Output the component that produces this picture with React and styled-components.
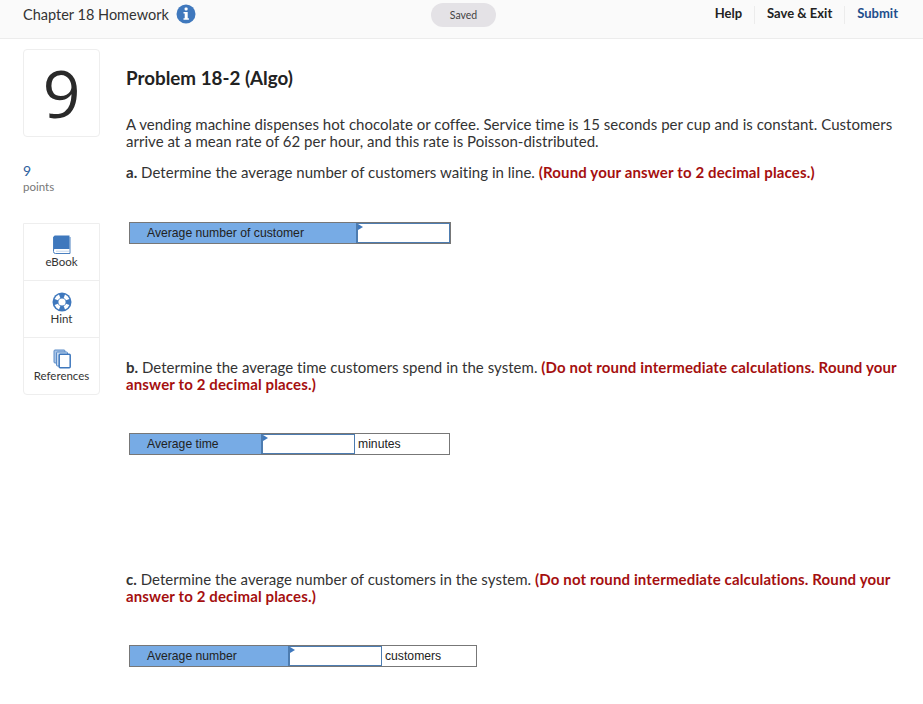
import React from 'react';
import styled, { createGlobalStyle } from 'styled-components';

const GlobalStyle = createGlobalStyle`
  html, body { margin: 0; padding: 0; background: #fff; }
  body { font-family: 'Lato', 'Liberation Sans', sans-serif; color: #222; }
`;

const TopBar = styled.header`
  height: 28px;
  background: #fafafa;
  border-bottom: 1px solid #ececec;
  display: grid;
  grid-template-columns: 1fr auto 1fr;
  align-items: center;
  padding: 0 25px 10px 23px;
`;
const TitleGroup = styled.div`
  display: flex;
  align-items: center;
  gap: 7px;
  font-size: 14.5px;
  color: #333;
`;
const SavedPill = styled.div`
  width: 65px;
  height: 24px;
  border-radius: 12px;
  background: #e4e2e6;
  color: #444;
  font-size: 10.5px;
  display: flex;
  align-items: center;
  justify-content: center;
  margin: 2px 0 0 6px;
`;
const TopActions = styled.nav`
  display: flex;
  justify-content: flex-end;
  align-items: center;
  margin-top: 2px;
`;
const TopAction = styled.span`
  font-size: 13px;
  font-weight: 700;
  color: ${p => (p.$accent ? '#1f4e8c' : '#222')};
  padding: 0 ${p => (p.$last ? 0 : 12)}px 0 12px;
  height: 18px;
  line-height: 15px;
  border-right: ${p => (p.$last ? 'none' : '1px solid #ececec')};
`;

const Page = styled.div`
  display: flex;
  padding: 10px 0 0 23px;
`;
const Side = styled.aside`
  width: 77px;
  flex: none;
  margin-right: 26px;
`;
const NumberCard = styled.div`
  height: 83px;
  padding-bottom: 3px;
  border: 1px solid #eee;
  border-radius: 4px;
  display: flex;
  align-items: center;
  justify-content: center;
  font-family: 'Open Sans', 'Liberation Sans', sans-serif;
  font-size: 66px;
  font-weight: 400;
  color: #2a2a2a;
`;
const Points = styled.div`
  margin-top: 26px;
  font-size: 14px;
  color: #2d5f9e;
  line-height: 16px;
`;
const PointsLabel = styled.div`
  margin-top: 1px;
  font-size: 11.5px;
  color: #777;
  line-height: 14px;
`;
const ToolCard = styled.div`
  margin-top: 29px;
  border: 1px solid #eee;
  border-radius: 0 0 4px 4px;
`;
const Tool = styled.div`
  height: ${p => (p.$last ? 56 : 57)}px;
  border-bottom: ${p => (p.$last ? 'none' : '1px solid #eee')};
  display: flex;
  flex-direction: column;
  align-items: center;
  padding-top: 11px;
  box-sizing: border-box;
  font-size: 11.5px;
  line-height: 14px;
  color: #333;
`;
const IconSlot = styled.div`
  height: 20px;
  display: flex;
`;
const Main = styled.main`
  flex: 1;
  min-width: 0;
  padding-right: 20px;
`;
const Heading = styled.h1`
  margin: 19px 0 0;
  font-size: 18.8px;
  line-height: 20px;
  font-weight: 700;
  color: #222;
`;
const Para = styled.p`
  margin: ${p => p.$top}px 0 0;
  font-size: 15px;
  line-height: 17px;
  letter-spacing: 0.03px;
  color: #333;
`;
const Red = styled.strong`
  color: #a50f0f;
  font-weight: 700;
  letter-spacing: 0.14px;
`;
const AnswerTable = styled.div`
  margin: ${p => p.$top}px 0 0 3px;
  display: flex;
  height: 22px;
  width: ${p => p.$width}px;
  box-sizing: border-box;
  border: 1px solid #777;
  font-family: 'Liberation Sans', Arial, sans-serif;
  font-size: 12.2px;
  color: #222;
`;
const Label = styled.div`
  width: ${p => p.$width}px;
  flex: none;
  background: #77abe5;
  padding-left: 17px;
  box-sizing: border-box;
  line-height: 20px;
`;
const Input = styled.div`
  position: relative;
  width: ${p => p.$width}px;
  flex: none;
  box-sizing: border-box;
  background: #fff;
  border: 1px solid #4d7cb0;
  border-left-width: 2px;
  &::before {
    content: '';
    position: absolute;
    left: 0;
    top: 0;
    border-left: 5px solid #3f78bd;
    border-top: 3px solid transparent;
    border-bottom: 3px solid transparent;
  }
`;
const Unit = styled.div`
  flex: 1;
  padding-left: 3px;
  line-height: 20px;
`;

const InfoIcon = () => (
  <svg width="20" height="20" viewBox="0 0 20 20">
    <circle cx="10" cy="10" r="9.5" fill="#3f78bd" />
    <rect x="8.6" y="3.6" width="3" height="3" rx="1" fill="#fff" />
    <path d="M7.5 8h4.2v6.2h1.2v1.6H7.5v-1.6h1.2V9.6H7.5z" fill="#fff" />
  </svg>
);
const BookIcon = () => (
  <svg width="18" height="20" viewBox="0 0 18 20">
    <path d="M2 .5h14.5V14H2a2 2 0 0 0-1.5.6V2A1.5 1.5 0 0 1 2 .5z" fill="#3f78bd" />
    <path d="M.5 2v14.5A2 2 0 0 0 2.5 18.5h14.5V2" fill="none" stroke="#4a80c0" />
    <path d="M3 14.5h13v2.5H3a1.2 1.2 0 0 1 0-2.5z" fill="#fff" />
    <path d="M3 16.2h13" stroke="#c4d7ee" />
  </svg>
);
const HintIcon = () => (
  <svg width="20" height="20" viewBox="0 0 20 20">
    <circle cx="10" cy="10" r="9.5" fill="#3f78bd" />
    <circle cx="10" cy="10" r="6.2" fill="none" stroke="#fff" strokeWidth="3.6" pathLength="360" strokeDasharray="44 46" strokeDashoffset="-23" />
    <circle cx="10" cy="10" r="3.6" fill="#fff" />
  </svg>
);
const RefIcon = () => (
  <svg width="18" height="20" viewBox="0 0 18 20">
    <rect x="1" y="1" width="11" height="13" rx="1" fill="#a9c4e6" stroke="#5b8cc8" />
    <rect x="3.5" y="3" width="11" height="14" rx="1" fill="#c7daf0" stroke="#5b8cc8" />
    <rect x="6.2" y="5.2" width="11" height="13.6" rx="1" fill="#fff" stroke="#3f78bd" strokeWidth="1.5" />
  </svg>
);

export default function App() {
  return (
    <>
      <GlobalStyle />
      <TopBar>
        <TitleGroup>Chapter 18 Homework <InfoIcon /></TitleGroup>
        <SavedPill>Saved</SavedPill>
        <TopActions>
          <TopAction>Help</TopAction>
          <TopAction>Save &amp; Exit</TopAction>
          <TopAction $accent $last>Submit</TopAction>
        </TopActions>
      </TopBar>
      <Page>
        <Side>
          <NumberCard>9</NumberCard>
          <Points>9</Points>
          <PointsLabel>points</PointsLabel>
          <ToolCard>
            <Tool><IconSlot><BookIcon /></IconSlot>eBook</Tool>
            <Tool><IconSlot><HintIcon /></IconSlot>Hint</Tool>
            <Tool $last><IconSlot><RefIcon /></IconSlot>References</Tool>
          </ToolCard>
        </Side>
        <Main>
          <Heading>Problem 18-2 (Algo)</Heading>
          <Para $top={28}>
            A vending machine dispenses hot chocolate or coffee. Service time is 15 seconds per cup and is constant. Customers arrive at a mean rate of 62 per hour, and this rate is Poisson-distributed.
          </Para>
          <Para $top={14}>
            <b>a.</b> Determine the average number of customers waiting in line. <Red>(Round your answer to 2 decimal places.)</Red>
          </Para>
          <AnswerTable $top={41} $width={322}>
            <Label $width={226}>Average number of customer</Label>
            <Input $width={94} />
          </AnswerTable>
          <Para $top={115}>
            <b>b.</b> Determine the average time customers spend in the system. <Red>(Do not round intermediate calculations. Round your answer to 2 decimal places.)</Red>
          </Para>
          <AnswerTable $top={40} $width={321}>
            <Label $width={131}>Average time</Label>
            <Input $width={94} />
            <Unit>minutes</Unit>
          </AnswerTable>
          <Para $top={116}>
            <b>c.</b> Determine the average number of customers in the system. <Red>(Do not round intermediate calculations. Round your answer to 2 decimal places.)</Red>
          </Para>
          <AnswerTable $top={40} $width={348}>
            <Label $width={158}>Average number</Label>
            <Input $width={94} />
            <Unit>customers</Unit>
          </AnswerTable>
        </Main>
      </Page>
    </>
  );
}
